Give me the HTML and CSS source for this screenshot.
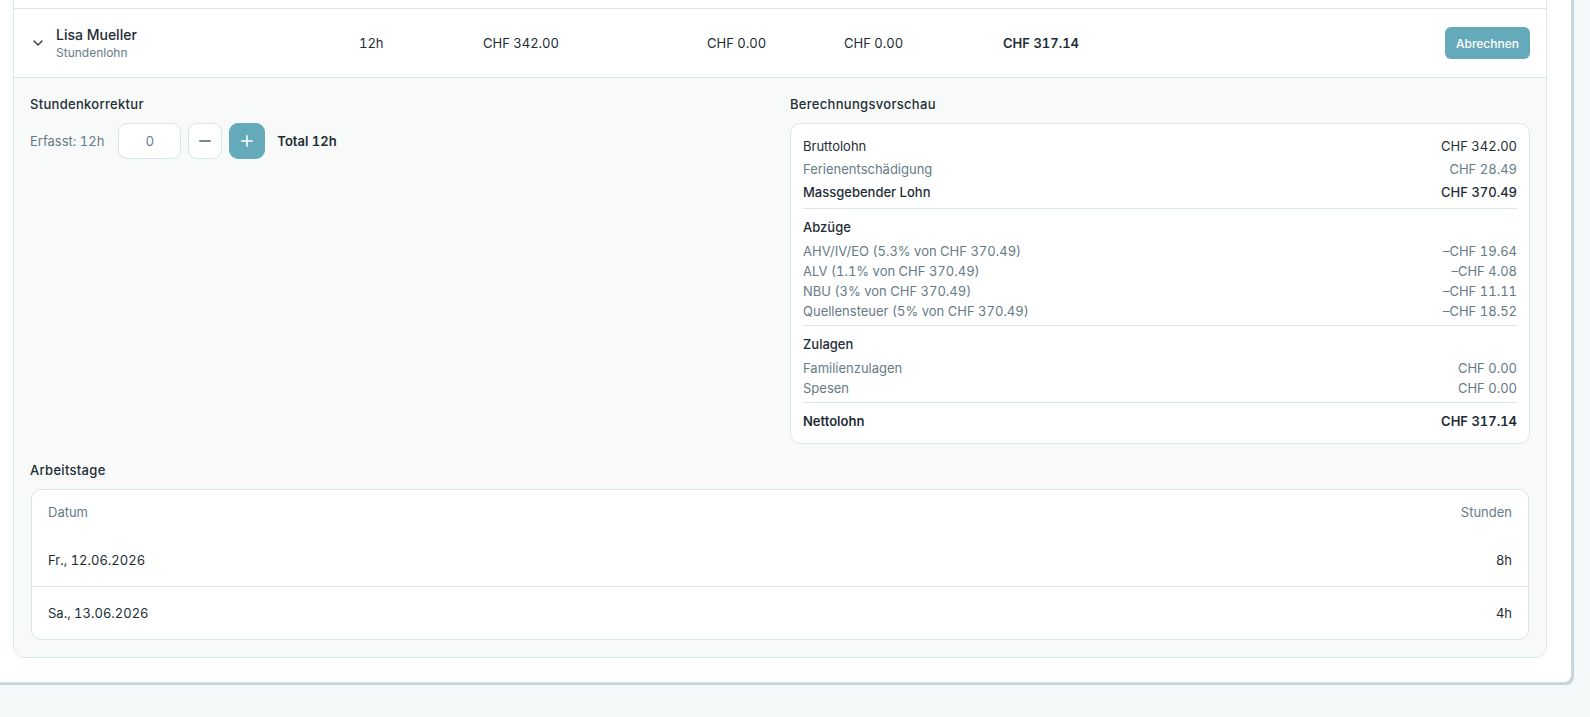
FILE: index.html
```html
<!DOCTYPE html>
<html lang="de">
<head>
    <meta charset="UTF-8">
    <meta name="viewport" content="width=device-width, initial-scale=1.0">
    <title>Lohnlauf</title>
    <link rel="stylesheet" href="styles.css">
</head>
<body>
    <main class="seite">
        <section class="karte">
            <div class="tabelle">
                <!-- vorherige Zeile, nur der untere Rand ist sichtbar -->
                <div class="zeile zeile_vorher"></div>

                <div class="zeile">
                    <div class="zelle_name">
                        <svg class="pfeil" width="16" height="16" viewBox="0 0 24 24" fill="none" stroke="currentColor" stroke-width="2" stroke-linecap="round" stroke-linejoin="round"><path d="m6 9 6 6 6-6"/></svg>
                        <div>
                            <div class="name">Lisa Mueller</div>
                            <div class="lohnart">Stundenlohn</div>
                        </div>
                    </div>
                    <div>12h</div>
                    <div>CHF 342.00</div>
                    <div>CHF 0.00</div>
                    <div>CHF 0.00</div>
                    <div class="netto">CHF 317.14</div>
                    <div class="aktion"><button class="knopf">Abrechnen</button></div>
                </div>

                <div class="details">
                    <div class="spalten">
                        <div>
                            <h3 class="titel">Stundenkorrektur</h3>
                            <div class="korrektur">
                                <span class="erfasst">Erfasst: 12h</span>
                                <input class="eingabe" type="text" value="0">
                                <button class="schritt">
                                    <svg width="18" height="18" viewBox="0 0 24 24" fill="none" stroke="currentColor" stroke-width="2" stroke-linecap="round"><path d="M5 12h14"/></svg>
                                </button>
                                <button class="schritt schritt_plus">
                                    <svg width="18" height="18" viewBox="0 0 24 24" fill="none" stroke="currentColor" stroke-width="2" stroke-linecap="round"><path d="M5 12h14"/><path d="M12 5v14"/></svg>
                                </button>
                                <span class="total">Total 12h</span>
                            </div>
                        </div>
                        <div>
                            <h3 class="titel">Berechnungsvorschau</h3>
                            <div class="vorschau">
                                <div class="gruppe gruppe_eng">
                                    <div class="posten dunkel"><span>Bruttolohn</span><span>CHF 342.00</span></div>
                                    <div class="posten"><span>Ferienentschädigung</span><span>CHF 28.49</span></div>
                                    <div class="posten halbfett"><span>Massgebender Lohn</span><span>CHF 370.49</span></div>
                                </div>
                                <div class="gruppe">
                                    <div class="gruppe_titel">Abzüge</div>
                                    <div class="liste">
                                        <div class="posten"><span>AHV/IV/EO (5.3% von CHF 370.49)</span><span>–CHF 19.64</span></div>
                                        <div class="posten"><span>ALV (1.1% von CHF 370.49)</span><span>–CHF 4.08</span></div>
                                        <div class="posten"><span>NBU (3% von CHF 370.49)</span><span>–CHF 11.11</span></div>
                                        <div class="posten"><span>Quellensteuer (5% von CHF 370.49)</span><span>–CHF 18.52</span></div>
                                    </div>
                                </div>
                                <div class="gruppe">
                                    <div class="gruppe_titel">Zulagen</div>
                                    <div class="liste">
                                        <div class="posten"><span>Familienzulagen</span><span>CHF 0.00</span></div>
                                        <div class="posten"><span>Spesen</span><span>CHF 0.00</span></div>
                                    </div>
                                </div>
                                <div class="gruppe gruppe_letzte">
                                    <div class="posten fett"><span>Nettolohn</span><span>CHF 317.14</span></div>
                                </div>
                            </div>
                        </div>
                    </div>

                    <h3 class="titel titel_tage">Arbeitstage</h3>
                    <div class="tage">
                        <div class="tag tag_kopf"><span>Datum</span><span>Stunden</span></div>
                        <div class="tag"><span>Fr., 12.06.2026</span><span>8h</span></div>
                        <div class="tag"><span>Sa., 13.06.2026</span><span>4h</span></div>
                    </div>
                </div>
            </div>
        </section>
    </main>
</body>
</html>
```

FILE: styles.css
```css
body{
    margin:0;
    background-color:#f5f8f8;
    color:#1e2d35;
    font-family:Inter, 'Noto Sans', sans-serif;
    font-size:13px;
    line-height:20px;
    font-variant-numeric:tabular-nums;
}
.seite{
    padding:0 18px 34px 0;
}
.karte{
    margin:-86px 0 0 -12px;
    background-color:#fff;
    border:1px solid #cfdde3;
    border-radius:8px;
    box-shadow:2px 2px 0 #c3d5dc;
    padding:24px;
}
.tabelle{
    border:1px solid #d8e5ea;
    border-radius:12px;
    overflow:hidden;
}
.zeile{
    display:grid;
    grid-template-columns:329px 124px 224px 137px 159px 1fr auto;
    align-items:center;
    padding:16px;
    background-color:#fff;
    border-bottom:1px solid #d8e5ea;
}
.zeile_vorher{
    height:36px;
}
.zelle_name{
    display:flex;
    align-items:center;
    gap:10px;
}
.pfeil{
    color:#2b3a42;
}
.name{
    font-size:14px;
    font-weight:500;
}
.lohnart{
    font-size:12px;
    line-height:16px;
    color:#667b85;
}
.netto{
    font-weight:600;
}
.aktion{
    text-align:right;
}
.knopf{
    height:32px;
    padding:0 11px;
    border:0;
    border-radius:6px;
    background-color:#65aaba;
    color:#fff;
    font-family:inherit;
    font-size:12px;
    font-weight:500;
}
.details{
    background-color:#f8fafa;
    padding:16px 16px 17px;
}
.spalten{
    display:grid;
    grid-template-columns:1fr 1fr;
    gap:20px;
    align-items:start;
}
.titel{
    margin:0 0 9px;
    font-size:13px;
    font-weight:500;
    line-height:20px;
    letter-spacing:0.3px;
}
.korrektur{
    display:flex;
    align-items:center;
    gap:7px;
}
.erfasst{
    color:#667b85;
    margin-right:7px;
}
.eingabe{
    box-sizing:border-box;
    width:63px;
    height:36px;
    border:1px solid #d8e5ea;
    border-radius:9px;
    background-color:#fff;
    text-align:center;
    font-family:inherit;
    font-size:13px;
    color:#6b7f88;
}
.schritt{
    box-sizing:border-box;
    width:34px;
    height:36px;
    display:flex;
    align-items:center;
    justify-content:center;
    padding:0;
    border:1px solid #d8e5ea;
    border-radius:9px;
    background-color:#fff;
    color:#50626b;
}
.schritt_plus{
    width:36px;
    border-color:#65aaba;
    background-color:#65aaba;
    color:#fff;
}
.total{
    margin-left:5px;
    font-weight:600;
}
.vorschau{
    background-color:#fff;
    border:1px solid #d8e5ea;
    border-radius:10px;
    padding:12px;
}
.gruppe{
    display:flex;
    flex-direction:column;
    gap:4px;
    padding:8px 0 4px;
    border-bottom:1px solid #d8e5ea;
}
.gruppe_eng{
    gap:3px;
    padding-top:0;
    padding-bottom:6px;
}
.gruppe_letzte{
    padding-bottom:0;
    border-bottom:0;
}
.gruppe_titel{
    font-weight:500;
}
.posten{
    display:flex;
    justify-content:space-between;
    color:#667b85;
}
.dunkel{
    color:#1e2d35;
}
.halbfett{
    color:#1e2d35;
    font-weight:500;
}
.fett{
    color:#1e2d35;
    font-weight:600;
}
.titel_tage{
    margin-top:16px;
}
.tage{
    margin:0 1px;
    background-color:#fff;
    border:1px solid #d8e5ea;
    border-radius:10px;
}
.tag{
    display:flex;
    justify-content:space-between;
    padding:16px;
}
.tag + .tag + .tag{
    border-top:1px solid #d8e5ea;
}
.tag_kopf{
    padding:12px 16px;
    color:#667b85;
}
```
